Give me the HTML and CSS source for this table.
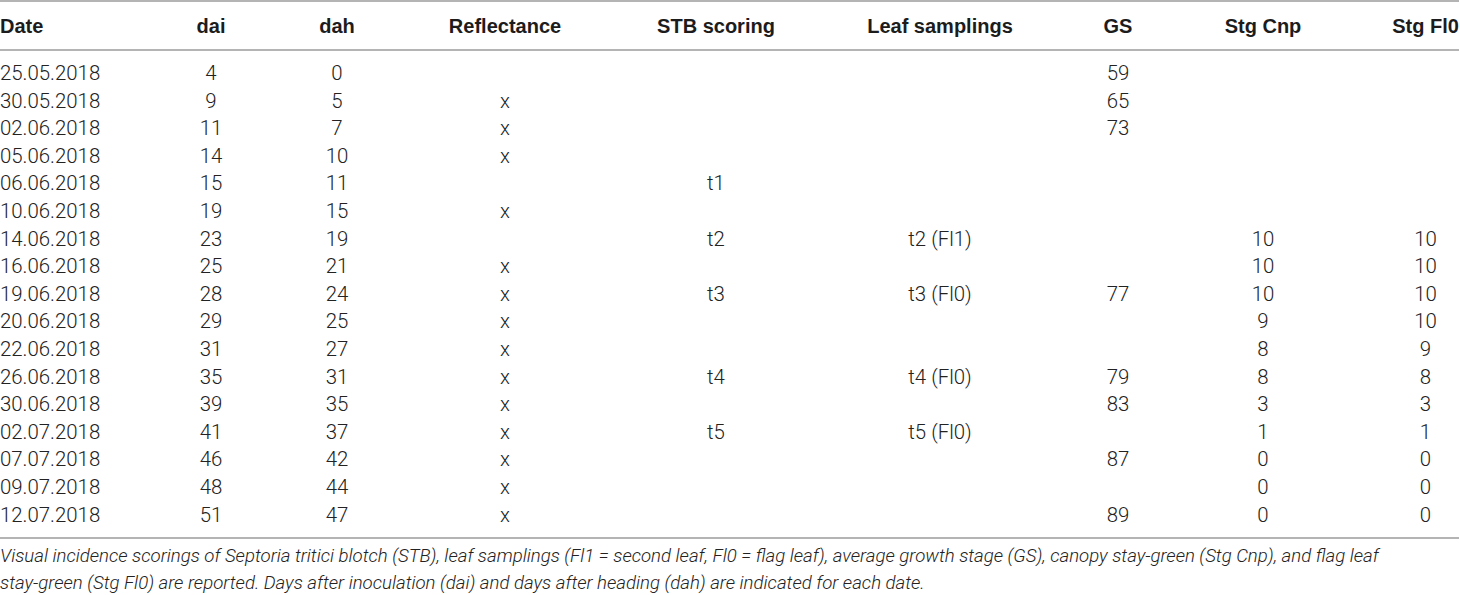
FILE: index.html
```html
<!DOCTYPE html>
<html lang="en">
<head>
<meta charset="utf-8">
<title>Table</title>
<link rel="stylesheet" href="styles.css">
</head>
<body>
<div class="wrap">
<table class="data">
<colgroup>
<col class="c-date"><col class="c-dai"><col class="c-dah"><col class="c-refl"><col class="c-stb"><col class="c-leaf"><col class="c-gs"><col class="c-cnp"><col class="c-fl">
</colgroup>
<thead>
<tr><th class="left">Date</th><th>dai</th><th>dah</th><th>Reflectance</th><th>STB scoring</th><th>Leaf samplings</th><th>GS</th><th>Stg Cnp</th><th>Stg Fl0</th></tr>
</thead>
<tbody>
<tr><td class="left">25.05.2018</td><td>4</td><td>0</td><td></td><td></td><td></td><td>59</td><td></td><td></td></tr>
<tr><td class="left">30.05.2018</td><td>9</td><td>5</td><td>x</td><td></td><td></td><td>65</td><td></td><td></td></tr>
<tr><td class="left">02.06.2018</td><td>11</td><td>7</td><td>x</td><td></td><td></td><td>73</td><td></td><td></td></tr>
<tr><td class="left">05.06.2018</td><td>14</td><td>10</td><td>x</td><td></td><td></td><td></td><td></td><td></td></tr>
<tr><td class="left">06.06.2018</td><td>15</td><td>11</td><td></td><td>t1</td><td></td><td></td><td></td><td></td></tr>
<tr><td class="left">10.06.2018</td><td>19</td><td>15</td><td>x</td><td></td><td></td><td></td><td></td><td></td></tr>
<tr><td class="left">14.06.2018</td><td>23</td><td>19</td><td></td><td>t2</td><td>t2 (Fl1)</td><td></td><td>10</td><td>10</td></tr>
<tr><td class="left">16.06.2018</td><td>25</td><td>21</td><td>x</td><td></td><td></td><td></td><td>10</td><td>10</td></tr>
<tr><td class="left">19.06.2018</td><td>28</td><td>24</td><td>x</td><td>t3</td><td>t3 (Fl0)</td><td>77</td><td>10</td><td>10</td></tr>
<tr><td class="left">20.06.2018</td><td>29</td><td>25</td><td>x</td><td></td><td></td><td></td><td>9</td><td>10</td></tr>
<tr><td class="left">22.06.2018</td><td>31</td><td>27</td><td>x</td><td></td><td></td><td></td><td>8</td><td>9</td></tr>
<tr><td class="left">26.06.2018</td><td>35</td><td>31</td><td>x</td><td>t4</td><td>t4 (Fl0)</td><td>79</td><td>8</td><td>8</td></tr>
<tr><td class="left">30.06.2018</td><td>39</td><td>35</td><td>x</td><td></td><td></td><td>83</td><td>3</td><td>3</td></tr>
<tr><td class="left">02.07.2018</td><td>41</td><td>37</td><td>x</td><td>t5</td><td>t5 (Fl0)</td><td></td><td>1</td><td>1</td></tr>
<tr><td class="left">07.07.2018</td><td>46</td><td>42</td><td>x</td><td></td><td></td><td>87</td><td>0</td><td>0</td></tr>
<tr><td class="left">09.07.2018</td><td>48</td><td>44</td><td>x</td><td></td><td></td><td></td><td>0</td><td>0</td></tr>
<tr><td class="left">12.07.2018</td><td>51</td><td>47</td><td>x</td><td></td><td></td><td>89</td><td>0</td><td>0</td></tr>
</tbody>
</table>
<p class="caption">Visual incidence scorings of Septoria tritici blotch (STB), leaf samplings (Fl1 = second leaf, Fl0 = flag leaf), average growth stage (GS), canopy stay-green (Stg Cnp), and flag leaf stay-green (Stg Fl0) are reported. Days after inoculation (dai) and days after heading (dah) are indicated for each date.</p>
</div>
</body>
</html>
```
FILE: styles.css
```css
html, body {
  margin: 0;
  padding: 0;
  background: #ffffff;
}
.wrap {
  width: 1460px;
}
.data {
  width: 1459px;
  table-layout: fixed;
  border-collapse: collapse;
  font-family: "Liberation Sans", Arial, sans-serif;
  font-size: 20px;
  color: #2a2a2a;
}
.c-date { width: 104px; }
.c-dai { width: 214px; }
.c-dah { width: 38px; }
.c-refl { width: 298px; }
.c-stb { width: 124px; }
.c-leaf { width: 324px; }
.c-gs { width: 32px; }
.c-cnp { width: 258px; }
.c-fl { width: 67px; }
.data thead tr {
  border-top: 2px solid #b4b4b4;
  border-bottom: 2px solid #b4b4b4;
}
.data th {
  padding: 1px 0 0;
  height: 46px;
  line-height: 46px;
  font-weight: bold;
  color: #1c1c1c;
  text-align: center;
  white-space: nowrap;
}
.data td {
  padding: 0;
  height: 27.6px;
  line-height: 27.6px;
  text-align: center;
  white-space: nowrap;
  font-family: Roboto, "Liberation Sans", sans-serif;
  font-weight: 300;
  font-size: 20.4px;
  color: #222222;
}
.data tbody tr:first-child td {
  padding-top: 9px;
}
.data tbody tr:last-child td {
  padding-bottom: 8px;
}
.data tbody tr:last-child {
  border-bottom: 2px solid #b4b4b4;
}
.data .left {
  text-align: left;
}
.caption {
  margin: 0;
  max-width: 1395px;
  padding-top: 4px;
  font-family: Roboto, "Liberation Sans", sans-serif;
  font-weight: 300;
  font-style: italic;
  font-size: 18.6px;
  line-height: 27px;
  color: #222222;
}
```
